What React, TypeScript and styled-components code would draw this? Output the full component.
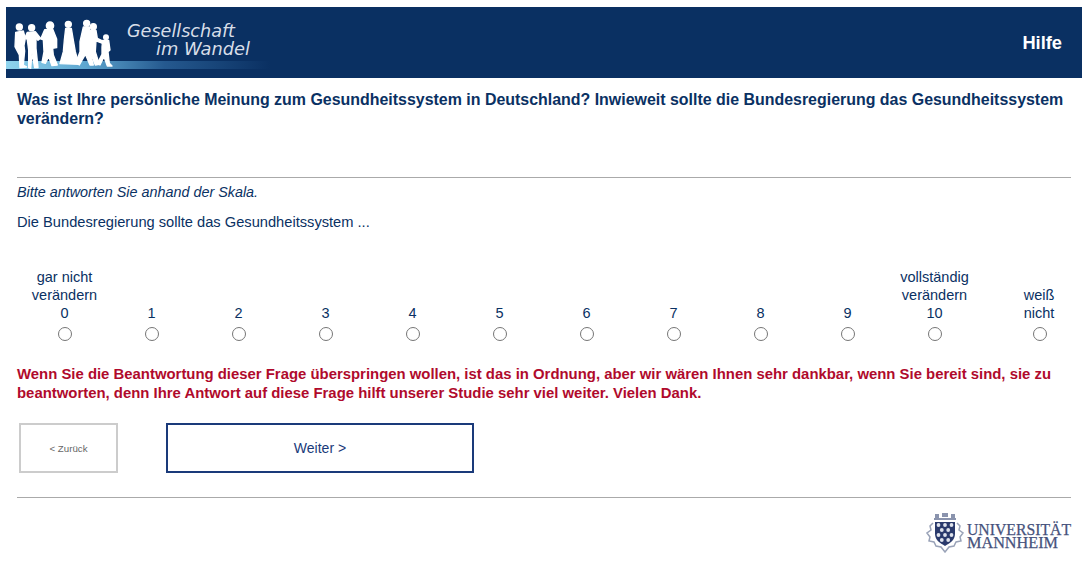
import React from "react";
import styled, { createGlobalStyle } from "styled-components";

const Global = createGlobalStyle`
  html, body { margin: 0; padding: 0; background: #fff; }
  body { font-family: "Liberation Sans", Arial, sans-serif; color: #0a3163; }
`;

const Page = styled.div`
  width: 1076px;
  height: 559px;
  padding: 7px 6px 0;
`;

const Banner = styled.header`
  height: 71px;
  background: #0a3062;
  display: flex;
  align-items: center;
  justify-content: space-between;
  padding-right: 20px;
  overflow: hidden;
`;

const HelpLink = styled.a`
  color: #fff;
  font-size: 18.3px;
  font-weight: 700;
  padding-top: 1px;
`;

const Main = styled.main`
  padding: 0 11px;
`;

const Question = styled.h1`
  margin: 0;
  padding-top: 12px;
  height: 99px;
  box-sizing: border-box;
  font-size: 15.94px;
  line-height: 19px;
  font-weight: 700;
  color: #0a3163;
`;

const Rule = styled.hr`
  margin: 0;
  border: 0;
  height: 1px;
  background: #aaa;
`;

const Hint = styled.p`
  margin: 6px 0 0;
  font-size: 14.36px;
  line-height: 16px;
  font-style: italic;
  color: #0a3163;
`;

const Lead = styled.p`
  margin: 14px 0 0;
  font-size: 14.67px;
  line-height: 16px;
  color: #0a3163;
`;

const Scale = styled.div`
  display: grid;
  grid-template-columns: repeat(11, 87px) 31px 60px;
  align-items: end;
  margin: 36px 0 0 4px;
  height: 75px;
`;

const Option = styled.label<{ $col?: number }>`
  display: flex;
  flex-direction: column;
  align-items: center;
  grid-column: ${(p) => p.$col ?? "auto"};
  font-size: 14.5px;
  line-height: 18px;
  text-align: center;
  color: #0a3163;
  white-space: nowrap;
`;

const Radio = styled.span`
  display: block;
  width: 12px;
  height: 12px;
  margin: 5px 0 0 1px;
  border: 1px solid #767676;
  border-radius: 50%;
  background: #fff;
`;

const Notice = styled.p`
  margin: 24px 0 0;
  font-size: 14.9px;
  line-height: 19px;
  font-weight: 700;
  color: #b00a2c;
`;

const Buttons = styled.div`
  display: flex;
  gap: 48px;
  margin: 20px 0 24px 2px;
`;

const BackButton = styled.button`
  width: 99px;
  height: 50px;
  padding: 0;
  background: #fff;
  border: 2px solid #ccc;
  color: #666;
  font: 9.7px "Liberation Sans", Arial, sans-serif;
`;

const NextButton = styled.button`
  width: 308px;
  height: 50px;
  padding: 0;
  background: #fff;
  border: 2px solid #1a3a7a;
  color: #1a3a7a;
  font: 14px "Liberation Sans", Arial, sans-serif;
`;

const Footer = styled.footer`
  display: flex;
  justify-content: flex-end;
  padding-top: 15px;
`;

const UniMark = styled.svg`
  width: 148px;
  height: 40px;
  margin-right: -3px;
`;

const BannerLogo = () => (
  <svg width="270" height="71" viewBox="0 0 270 71">
    <defs>
      <linearGradient id="band" x1="0" x2="1" y1="0" y2="0">
        <stop offset="0" stopColor="#8fd4ee" />
        <stop offset="0.3" stopColor="#5ea6d0" />
        <stop offset="0.6" stopColor="#25598f" />
        <stop offset="1" stopColor="#0a3062" />
      </linearGradient>
      <filter id="soft" x="-5%" y="-5%" width="110%" height="110%">
        <feGaussianBlur stdDeviation="0.35" />
      </filter>
    </defs>
    <rect x="0" y="54" width="264" height="8" fill="url(#band)" />
    <g fill="#fff" stroke="#fff" strokeWidth="4" strokeLinejoin="round" filter="url(#soft)" transform="translate(4 8) scale(0.3333)">
      <circle cx="28" cy="36" r="9" />
      <path d="M17 52L40 48L46 70L42 92L44 108L40 150L50 156L30 158L28 120L24 112L15 95Z" />
      <circle cx="65" cy="38" r="9" />
      <path d="M52 52L76 50L92 70L84 76L78 66L78 100L84 158L74 158L66 115L62 160L56 158L56 105L52 75L46 65Z" />
      <circle cx="120" cy="32" r="11" />
      <path d="M104 44L128 42L140 72L140 98L128 100L130 120L142 150L126 152L116 125L106 145L96 142L102 110L100 75L92 72Z" />
      <circle cx="175" cy="28" r="9" />
      <path d="M167 40L184 40L190 75L196 110L207 148L150 146L160 110L163 75Z" />
      <circle cx="230" cy="25" r="9" />
      <path d="M220 36L238 36L244 80L240 110L250 150L240 150L226 118L208 150L198 142L210 110L210 80Z" />
      <circle cx="250" cy="35" r="9" />
      <path d="M240 46L258 46L262 70L282 80L280 86L258 78L256 110L268 148L256 150L240 110Z" />
      <circle cx="288" cy="67" r="7" />
      <path d="M278 76L296 76L300 105L294 110L298 145L306 153L292 153L282 125L270 150L262 146L276 118L276 96Z" />
    </g>
    <text x="121" y="30" fill="#d8dee8" fontFamily="'DejaVu Sans', sans-serif" fontStyle="italic" fontSize="17" textLength="108" lengthAdjust="spacingAndGlyphs">Gesellschaft</text>
    <text x="150" y="48" fill="#d8dee8" fontFamily="'DejaVu Sans', sans-serif" fontStyle="italic" fontSize="17" textLength="94" lengthAdjust="spacingAndGlyphs">im Wandel</text>
  </svg>
);

const UniLogo = () => (
  <UniMark viewBox="0 0 148 40">
    <g fill="#8a93ad">
      <rect x="9" y="1" width="4" height="4" />
      <rect x="16" y="0" width="6" height="4" />
      <rect x="25" y="1" width="4" height="4" />
      <rect x="8" y="5" width="22" height="2" />
    </g>
    <path d="M7 10l-3 3 1 4-4 3 3 4-1 4 5 1 2 4 5 1 4 5 4-5 5-1 2-4 5-1-1-4 3-4-4-3 1-4-3-3" fill="none" stroke="#9aa3b8" strokeWidth="1.5" />
    <path d="M9 9h20v12c0 6-5 9-10 12-5-3-10-6-10-12z" fill="#2a3a6c" />
    <g fill="#dfe3ec">
      {[
        [12.5, 12], [19, 12], [25.5, 12], [15.8, 17], [22.2, 17], [12.5, 22], [19, 22], [25.5, 22], [15.8, 27], [22.2, 27],
      ].map(([x, y]) => (
        <circle key={`${x}-${y}`} cx={x} cy={y} r="1.9" />
      ))}
    </g>
    <text x="41" y="22" fill="#46527c" stroke="#46527c" strokeWidth="0.25" fontFamily="'Liberation Serif', serif" fontSize="16" textLength="104" lengthAdjust="spacingAndGlyphs">UNIVERSITÄT</text>
    <text x="41" y="35" fill="#46527c" stroke="#46527c" strokeWidth="0.25" fontFamily="'Liberation Serif', serif" fontSize="16" textLength="91" lengthAdjust="spacingAndGlyphs">MANNHEIM</text>
  </UniMark>
);

const values = [
  ["gar nicht", "verändern", "0"], ["1"], ["2"], ["3"], ["4"], ["5"], ["6"], ["7"], ["8"], ["9"],
  ["vollständig", "verändern", "10"],
];

export default function App() {
  return (
    <Page>
      <Global />
      <Banner>
        <BannerLogo />
        <HelpLink>Hilfe</HelpLink>
      </Banner>
      <Main>
        <Question>
          Was ist Ihre persönliche Meinung zum Gesundheitssystem in Deutschland? Inwieweit sollte die Bundesregierung das Gesundheitssystem verändern?
        </Question>
        <Rule />
        <Hint>Bitte antworten Sie anhand der Skala.</Hint>
        <Lead>Die Bundesregierung sollte das Gesundheitssystem ...</Lead>
        <Scale>
          {values.map((lines) => (
            <Option key={lines[lines.length - 1]}>
              {lines.map((l) => (
                <span key={l}>{l}</span>
              ))}
              <Radio />
            </Option>
          ))}
          <Option $col={13}>
            <span>weiß</span>
            <span>nicht</span>
            <Radio />
          </Option>
        </Scale>
        <Notice>
          Wenn Sie die Beantwortung dieser Frage überspringen wollen, ist das in Ordnung, aber wir wären Ihnen sehr dankbar, wenn Sie bereit sind, sie zu beantworten, denn Ihre Antwort auf diese Frage hilft unserer Studie sehr viel weiter. Vielen Dank.
        </Notice>
        <Buttons>
          <BackButton>&lt; Zurück</BackButton>
          <NextButton>Weiter &gt;</NextButton>
        </Buttons>
        <Rule />
        <Footer>
          <UniLogo />
        </Footer>
      </Main>
    </Page>
  );
}
